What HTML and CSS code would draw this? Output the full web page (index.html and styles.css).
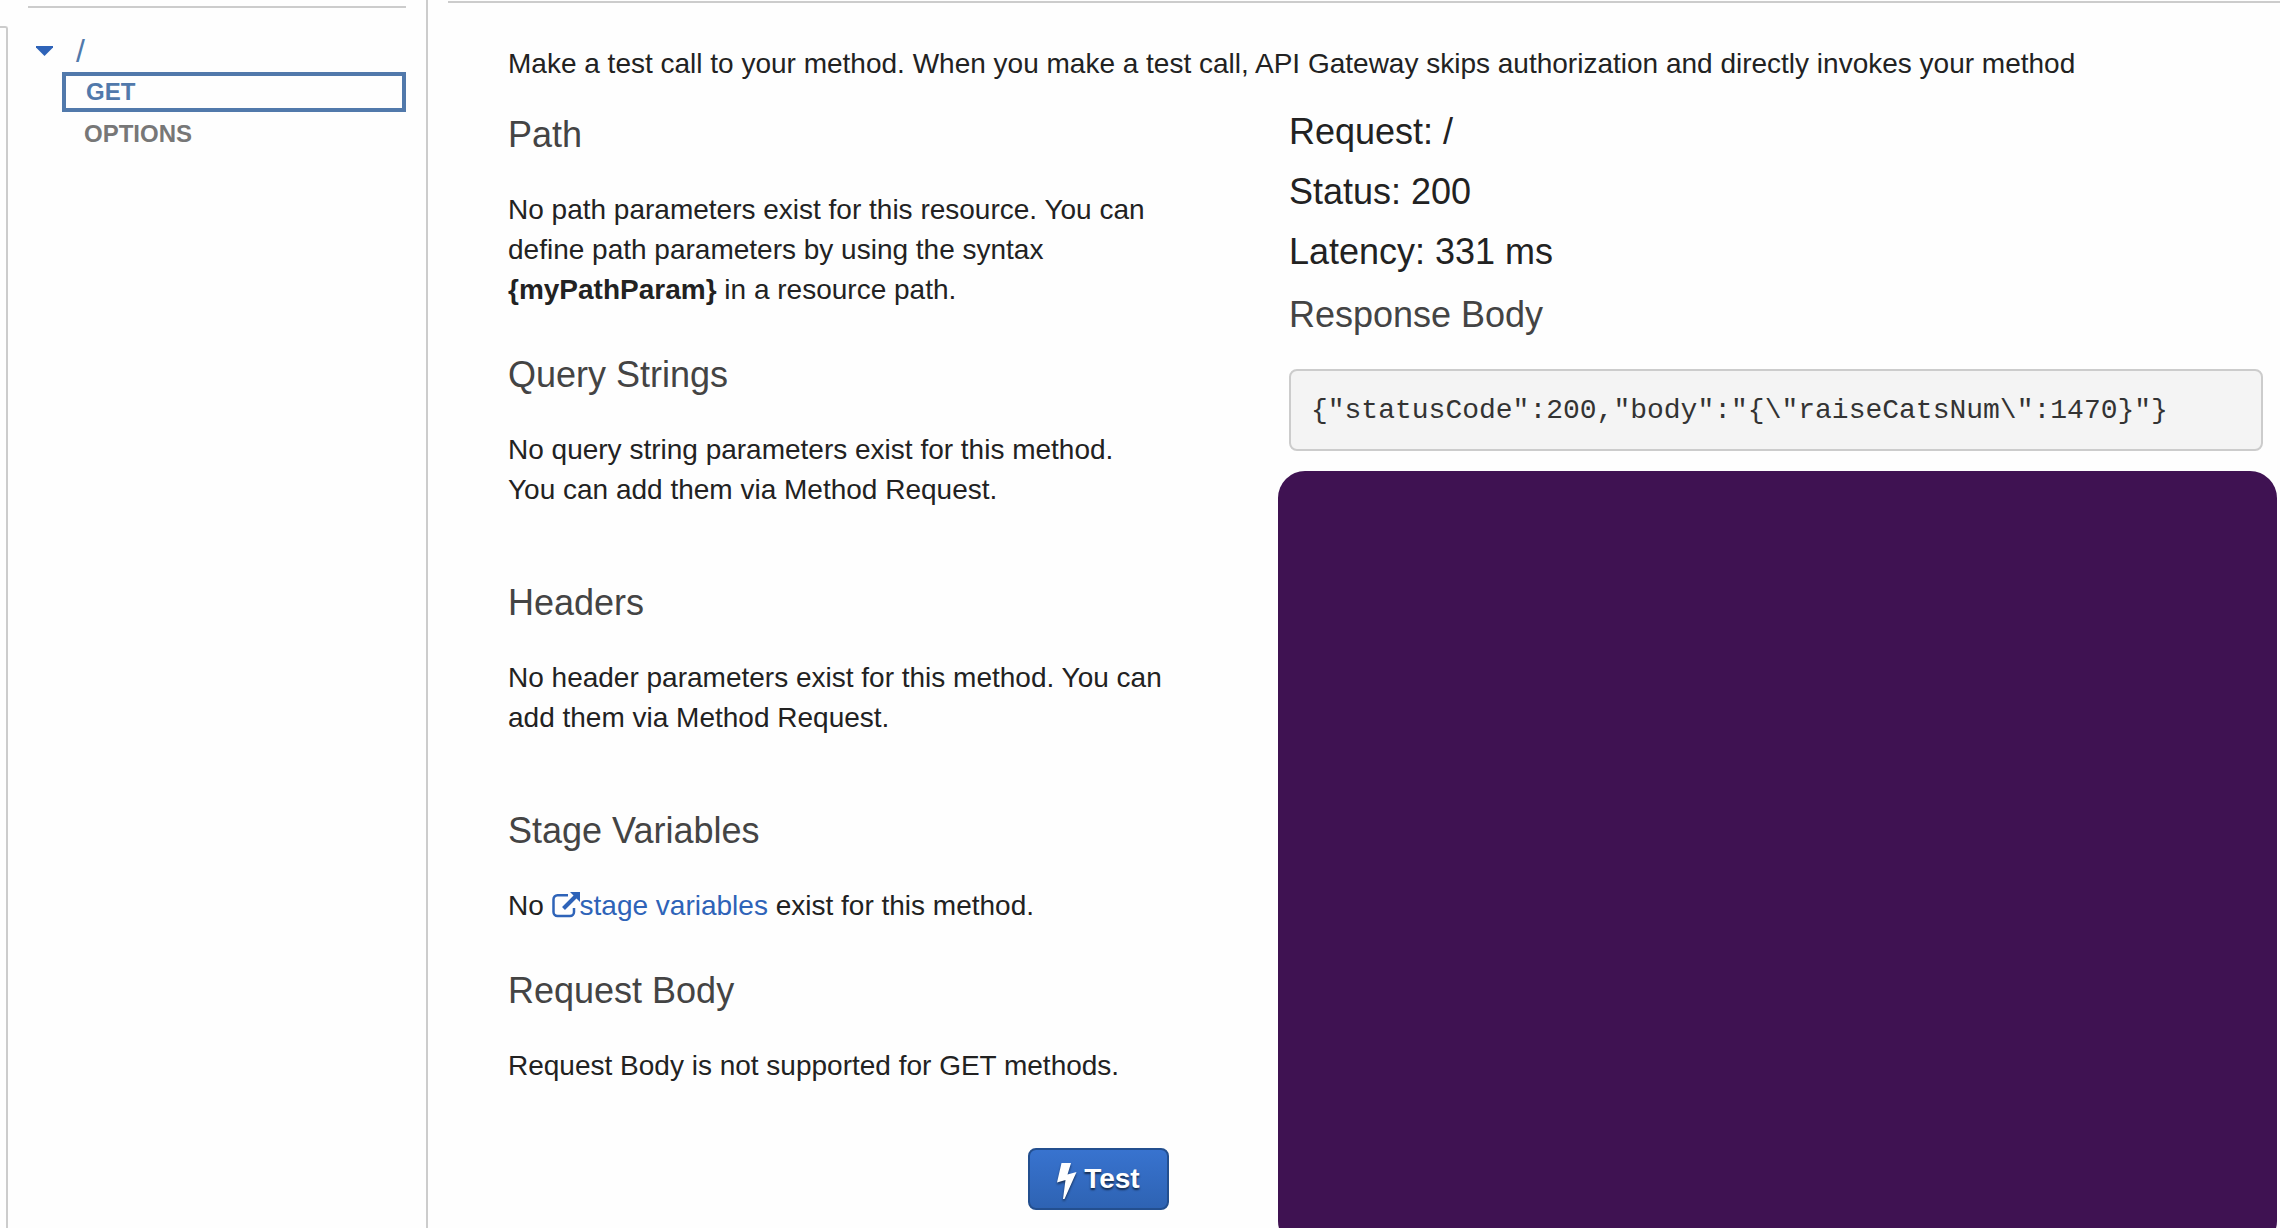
FILE: index.html
```html
<!DOCTYPE html>
<html lang="en">
<head>
  <meta charset="utf-8">
  <title>Method Test - API Gateway</title>
  <link rel="stylesheet" href="styles.css">
</head>
<body>
  <div class="app">
    <div class="rail"></div>
    <nav class="sidebar" aria-label="Resources">
      <div class="resource">
        <svg class="caret" viewBox="0 0 17 10" aria-hidden="true"><path d="M0 0h17v1.500L8.500 10 0 1.500z"/></svg>
        <a class="resource-path" href="#root">/</a>
      </div>
      <ul class="methods">
        <li><a class="method method-active" href="#get">GET</a></li>
        <li><a class="method" href="#options">OPTIONS</a></li>
      </ul>
    </nav>
    <main class="main">
      <div class="content">
        <p class="intro">Make a test call to your method. When you make a test call, API Gateway skips authorization and directly invokes your method</p>
        <div class="columns">
          <div class="request">
            <section class="section">
              <h2>Path</h2>
              <p>No path parameters exist for this resource. You can define path parameters by using the syntax <strong>{myPathParam}</strong> in a resource path.</p>
            </section>
            <section class="section section-spaced">
              <h2>Query Strings</h2>
              <p>No query string parameters exist for this method.<br>You can add them via Method Request.</p>
            </section>
            <section class="section section-spaced">
              <h2>Headers</h2>
              <p>No header parameters exist for this method. You can add them via Method Request.</p>
            </section>
            <section class="section">
              <h2>Stage Variables</h2>
              <p>No <a class="link" href="#stage-variables"><svg class="external" viewBox="0 0 28 28" aria-hidden="true"><path class="external-frame" d="M16 4.200H5.500a4 4 0 0 0-4 4V21a4 4 0 0 0 4 4H18a4 4 0 0 0 4-4v-4"/><path class="external-shaft" d="M11.500 17.500 24 5"/><path class="external-head" d="M18 1H28v10z"/></svg>stage variables</a> exist for this method.</p>
            </section>
            <section class="section">
              <h2>Request Body</h2>
              <p>Request Body is not supported for GET methods.</p>
            </section>
            <button class="test" type="button">
              <svg class="bolt" viewBox="0 0 20 36" aria-hidden="true"><path d="M4.500 0h9.500L10.500 11.500 19.500 9 7.500 36H6l2.500-19L0 19.500z"/></svg>
              <span>Test</span>
            </button>
          </div>
          <div class="response">
            <div class="summary">Request: /</div>
            <div class="summary">Status: 200</div>
            <div class="summary">Latency: 331 ms</div>
            <h2 class="response-title">Response Body</h2>
            <pre class="body-box">{"statusCode":200,"body":"{\"raiseCatsNum\":1470}"}</pre>
            <div class="cover"></div>
          </div>
        </div>
      </div>
    </main>
  </div>
</body>
</html>
```
FILE: styles.css
```css
* {
  box-sizing: border-box;
}

body {
  margin: 0;
  background: #fefefe;
  color: #222;
  font-family: "Liberation Sans", Arial, sans-serif;
  font-size: 28px;
  line-height: 40px;
}

h2,
p,
ul,
pre {
  margin: 0;
}

a {
  text-decoration: none;
}

.app {
  display: flex;
  min-height: 100vh;
  overflow: hidden;
}

.rail {
  flex: none;
  width: 8px;
  margin-top: 26px;
  border-top: 2px solid #ccc;
  border-right: 2px solid #ccc;
  border-top-right-radius: 3px;
}

.sidebar {
  flex: none;
  width: 378px;
  margin: 6px 20px 0;
  border-top: 2px solid #ccc;
  padding-top: 22px;
}

.resource {
  display: flex;
  align-items: center;
  height: 42px;
  padding-left: 8px;
  gap: 23px;
}

.caret {
  width: 17px;
  height: 10px;
  fill: #2e63b8;
}

.resource-path {
  color: #5179ab;
  font-size: 32px;
}

.methods {
  padding-left: 34px;
  list-style: none;
}

.method {
  display: block;
  padding: 0 22px;
  color: #777;
  font-size: 24px;
  font-weight: bold;
  line-height: 44px;
}

.method-active {
  border: 4px solid #5179ab;
  padding: 0 20px;
  color: #5179ab;
  line-height: 32px;
}

.main {
  display: flex;
  flex: 1;
  min-width: 0;
  border-left: 2px solid #ccc;
  padding: 1px 0 0 20px;
}

.content {
  display: flex;
  flex: 1;
  flex-direction: column;
  border-top: 2px solid #ccc;
  padding: 41px 17px 16px 60px;
}

.columns {
  display: grid;
  flex: 1;
  grid-template-columns: 19fr 28fr;
  gap: 120px;
}

h2 {
  color: #444;
  font-size: 36px;
  font-weight: normal;
}

.request {
  display: flex;
  flex-direction: column;
  padding-top: 31px;
}

.section {
  display: grid;
  gap: 35px;
  padding-bottom: 45px;
}

.section-spaced {
  padding-bottom: 73px;
}

.link {
  color: #2e63b8;
}

.external {
  width: 28px;
  height: 28px;
  vertical-align: -4px;
}

.external-frame,
.external-shaft {
  fill: none;
  stroke: #2e63b8;
  stroke-width: 2.5;
}

.external-shaft {
  stroke-width: 4;
}

.external-head {
  fill: #2e63b8;
}

.test {
  display: flex;
  align-items: center;
  align-self: flex-end;
  justify-content: center;
  gap: 7px;
  width: 141px;
  height: 62px;
  margin-top: 17px;
  border: 2px solid #234f8f;
  border-radius: 8px;
  padding: 0;
  background: linear-gradient(#3873cf, #2e63b3);
  color: #fff;
  font: bold 28px "Liberation Sans", Arial, sans-serif;
  text-shadow: 0 2px 2px rgba(0, 0, 0, 0.6);
}

.bolt {
  width: 20px;
  height: 36px;
  margin-top: 4px;
  fill: #fff;
  filter: drop-shadow(0 2px 1px rgba(0, 0, 0, 0.5));
}

.response {
  display: flex;
  flex-direction: column;
  padding-top: 18px;
}

.summary {
  font-size: 36px;
  line-height: 60px;
}

.response-title {
  margin: 13px 0 34px;
}

.body-box {
  border: 2px solid #ccc;
  border-radius: 8px;
  padding: 20px 18px 18px 20px;
  background: #f4f4f4;
  color: #333;
  font-family: "Liberation Mono", "Courier New", monospace;
  font-size: 28px;
  white-space: pre-wrap;
}

.cover {
  flex: 1;
  margin: 20px -14px -36px -11px;
  border-radius: 27px;
  background: #3f1252;
}
```
